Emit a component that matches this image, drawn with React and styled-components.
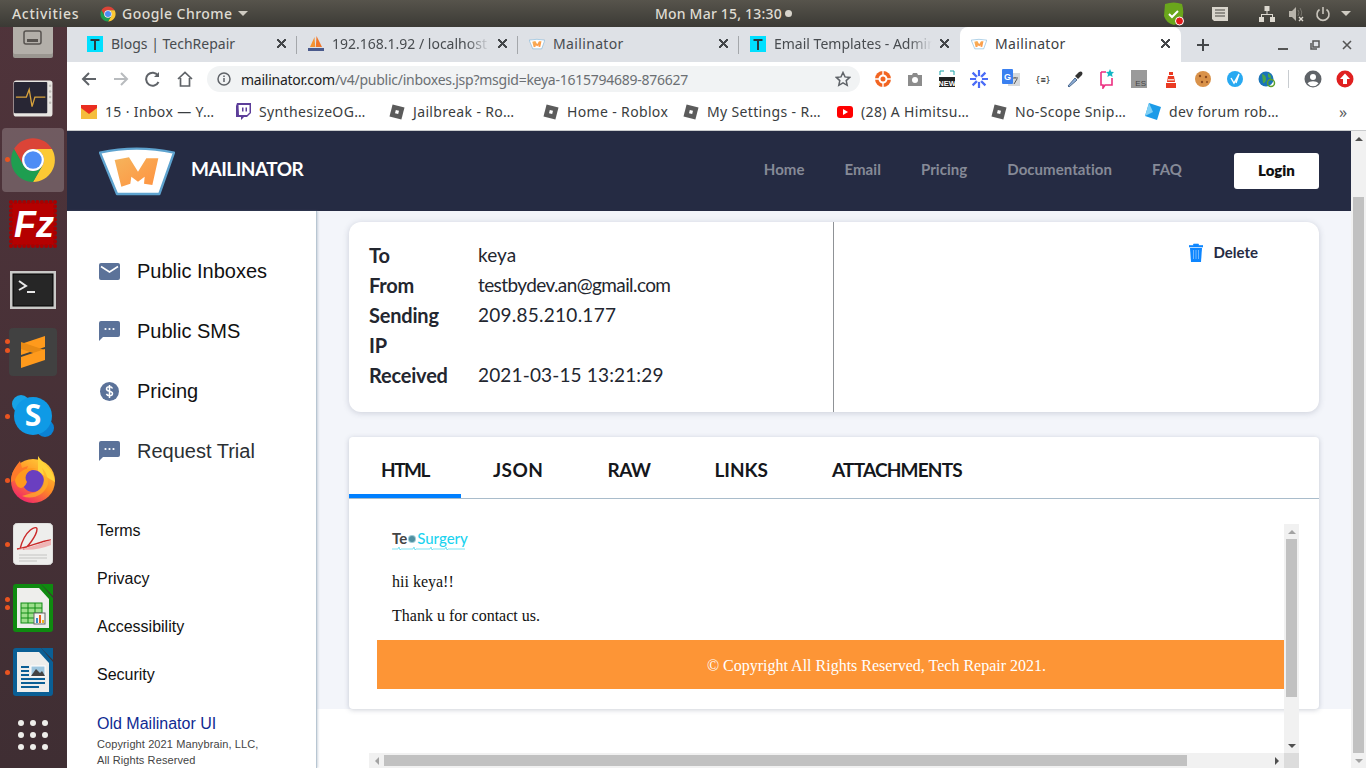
import { createGlobalStyle, styled } from "styled-components";

const GlobalStyle = createGlobalStyle`
  html, body { margin: 0; padding: 0; overflow: hidden; }
  * { box-sizing: border-box; }
  #root { width: 1366px; height: 768px; }
`;

const UI_FONT = `"Noto Sans", "Open Sans", sans-serif`;
const SITE_FONT = `Lato, "Open Sans", sans-serif`;

const Screen = styled.div`
  width: 1366px;
  height: 768px;
  display: flex;
  flex-direction: column;
  overflow: hidden;
  background: #fff;
`;

/* ubuntu top bar */
const TopBar = styled.div`
  height: 27px;
  flex: none;
  display: flex;
  align-items: center;
  background: linear-gradient(#57544c, #3b3a35);
  color: #dfdbd2;
  font: 500 14px ${UI_FONT};
`;
const Activities = styled.div`
  width: 88px;
  padding-left: 12px;
  letter-spacing: 0.7px;
`;
const AppMenu = styled.div`
  width: 567px;
  padding-left: 12px;
  display: flex;
  align-items: center;
  gap: 6px;
  letter-spacing: 0.45px;
`;
const Caret = styled.span`
  width: 0;
  height: 0;
  border-left: 5px solid transparent;
  border-right: 5px solid transparent;
  border-top: 5px solid #cfcbc2;
`;
const Clock = styled.div`
  width: 507px;
  display: flex;
  align-items: center;
  gap: 3px;
  letter-spacing: 0.2px;
`;
const ClockDot = styled.span`
  width: 7px;
  height: 7px;
  border-radius: 50%;
  background: #d8d4cb;
`;
const Tray = styled.div`
  flex: 1;
  display: flex;
  align-items: center;
`;
const TrayItem = styled.div`
  width: ${p => p.$w}px;
  display: flex;
  justify-content: center;
`;

const Desktop = styled.div`
  flex: 1;
  display: flex;
  min-height: 0;
`;

/* launcher */
const Dock = styled.div`
  width: 67px;
  margin-top: -27px;
  flex: none;
  display: flex;
  flex-direction: column;
  justify-content: flex-end;
  overflow: hidden;
  height: 768px;
  background: linear-gradient(#50343b, #3f2e33);
  clip-path: inset(27px 0 0 0);
`;
const DockSlot = styled.div`
  flex: none;
  height: 64px;
  padding-top: ${p => p.$nudge || 0}px;
  position: relative;
  display: flex;
  align-items: center;
  justify-content: center;
  background: ${p => (p.$active ? "rgba(255,255,255,.2)" : "transparent")};
  border-radius: 4px;
  margin: 0 3px 0 2px;
`;
const DockDot = styled.span`
  position: absolute;
  left: 3px;
  top: ${p => p.$top}px;
  width: 5px;
  height: 5px;
  border-radius: 50%;
  background: #e95420;
`;

const Browser = styled.div`
  flex: 1;
  min-width: 0;
  display: flex;
  flex-direction: column;
`;

/* tabs */
const TabStrip = styled.div`
  height: 35px;
  flex: none;
  display: flex;
  align-items: stretch;
  background: #dee1e6;
  padding-left: 9px;
  font: 14px ${UI_FONT};
`;
const BrowserTab = styled.div`
  width: 221px;
  flex: none;
  display: flex;
  align-items: center;
  padding: 0 10px 2px 11px;
  gap: 8px;
  position: relative;
  color: ${p => (p.$active ? "#3c4043" : "#484c50")};
  background: ${p => (p.$active ? "#fff" : "transparent")};
  border-radius: ${p => (p.$active ? "8px 8px 0 0" : "0")};
  &::after {
    content: "";
    display: ${p => (p.$sep ? "block" : "none")};
    position: absolute;
    right: 0;
    top: 9px;
    height: 18px;
    width: 1px;
    background: #a4a7ab;
  }
`;
const TabTitle = styled.span`
  flex: 1;
  white-space: nowrap;
  overflow: hidden;
  letter-spacing: ${p => p.$ls ?? 0}px;
  mask-image: ${p => (p.$fade ? "linear-gradient(90deg, #000 85%, transparent)" : "none")};
`;
const TabClose = styled.span`
  width: 9px;
  height: 9px;
  flex: none;
  margin-right: 1px;
  background:
    linear-gradient(45deg, transparent 44%, #44474a 44%, #44474a 56%, transparent 56%),
    linear-gradient(-45deg, transparent 44%, #44474a 44%, #44474a 56%, transparent 56%);
`;
const NewTab = styled.div`
  width: 44px;
  flex: none;
  display: flex;
  align-items: center;
  justify-content: center;
`;
const WindowButtons = styled.div`
  flex: none;
  display: flex;
  align-items: center;
  padding-left: 42px;
`;
const WindowButton = styled.div`
  width: 32px;
  display: flex;
  justify-content: center;
`;

/* toolbar */
const Toolbar = styled.div`
  height: 34px;
  flex: none;
  display: flex;
  align-items: center;
  background: #fff;
`;
const NavButton = styled.div`
  width: 32px;
  display: flex;
  justify-content: center;
`;
const NavGroup = styled.div`
  display: flex;
  padding-left: 6px;
  width: 140px;
`;
const Omnibox = styled.div`
  width: 653px;
  height: 26px;
  border-radius: 13px;
  background: #f1f3f4;
  display: flex;
  align-items: center;
  padding: 0 9px 0 10px;
  font: 14px ${UI_FONT};
  color: #6b6f73;
  gap: 10px;
`;
const Url = styled.div`
  flex: 1;
  white-space: nowrap;
  letter-spacing: -0.25px;
  b { font-weight: 400; color: #222; }
`;
const Extensions = styled.div`
  display: flex;
  align-items: center;
  padding-left: 7px;
`;
const Extension = styled.div`
  width: 32px;
  height: 20px;
  display: flex;
  align-items: center;
  justify-content: center;
`;
const ToolDivider = styled.div`
  width: 1px;
  height: 18px;
  background: #c8ccd0;
  margin: 0 8px 0 5px;
`;

/* bookmarks */
const Bookmarks = styled.div`
  height: 35px;
  flex: none;
  display: flex;
  align-items: center;
  padding: 0 0 3px 14px;
  border-bottom: 1px solid #c9cbcd;
  background: #fff;
  font: 14px ${UI_FONT};
  letter-spacing: 0.35px;
  color: #3a3d40;
`;
const Bookmark = styled.div`
  width: ${p => p.$w || 154}px;
  flex: none;
  display: flex;
  align-items: center;
  gap: 8px;
  white-space: nowrap;
`;
const MoreBookmarks = styled.div`
  margin-left: 40px;
  font-size: 16px;
  color: #5a5d60;
`;

/* page */
const Page = styled.div`
  flex: 1;
  min-height: 0;
  display: flex;
`;
const PageBody = styled.div`
  flex: 1;
  min-width: 0;
  display: flex;
  flex-direction: column;
`;
const VScroll = styled.div`
  width: 15px;
  flex: none;
  background: #f1f1f1;
  display: flex;
  flex-direction: column;
  align-items: center;
`;
const HScroll = styled.div`
  height: 15px;
  background: #f1f1f1;
  display: flex;
  align-items: center;
`;
const ArrowBox = styled.div`
  flex: none;
  width: 15px;
  height: ${p => p.$h || 15}px;
  display: flex;
  align-items: center;
  justify-content: center;
`;
const ArrowGlyph = styled.span`
  width: 0;
  height: 0;
  ${p => p.$dir === "up" && `border-left:4px solid transparent;border-right:4px solid transparent;border-bottom:4px solid ${p.$c};`}
  ${p => p.$dir === "down" && `border-left:4px solid transparent;border-right:4px solid transparent;border-top:4px solid ${p.$c};`}
  ${p => p.$dir === "left" && `border-top:4px solid transparent;border-bottom:4px solid transparent;border-right:4px solid ${p.$c};`}
  ${p => p.$dir === "right" && `border-top:4px solid transparent;border-bottom:4px solid transparent;border-left:4px solid ${p.$c};`}
`;
const VThumb = styled.div`
  width: 11px;
  height: ${p => p.$h}px;
  margin-top: ${p => p.$top || 0}px;
  flex: none;
  background: #c1c1c1;
`;
const HThumb = styled.div`
  height: 11px;
  width: ${p => p.$w}px;
  flex: none;
  background: #c1c1c1;
`;
const ScrollGap = styled.div`
  flex: 1;
`;

const SiteHeader = styled.header`
  height: 80px;
  flex: none;
  background: #252b43;
  display: flex;
  align-items: center;
  padding: 0 32px;
`;
const Brand = styled.div`
  display: flex;
  align-items: center;
  gap: 16px;
  color: #fff;
  font: 700 19px ${SITE_FONT};
  letter-spacing: -0.5px;
`;
const BrandName = styled.span`
  padding-bottom: 5px;
`;
const SiteNav = styled.nav`
  margin-left: auto;
  display: flex;
  align-items: center;
  gap: 40px;
  color: #868a97;
  font: 700 15px ${SITE_FONT};
  letter-spacing: 0.05px;
`;
const SiteNavLink = styled.span`
  padding-bottom: 5px;
`;
const LoginButton = styled.button`
  width: 85px;
  height: 36px;
  margin-left: 12px;
  padding: 0 0 2px;
  border: 0;
  border-radius: 3px;
  background: #fff;
  color: #111;
  font: 800 15px ${SITE_FONT};
`;
const SiteMain = styled.div`
  flex: 1;
  min-height: 0;
  display: flex;
`;

const Sidebar = styled.aside`
  width: 250px;
  flex: none;
  background: #fff;
  border-right: 1px solid #b8c6d2;
  box-shadow: 1px 0 2px rgba(120, 140, 160, 0.35);
  padding: 30px 0 0 30px;
  font-family: "Liberation Sans", Arial, sans-serif;
  color: #111;
  position: relative;
`;
const SideNav = styled.div`
  display: flex;
  flex-direction: column;
  margin-bottom: 26px;
`;
const SideNavItem = styled.div`
  height: 60px;
  display: flex;
  align-items: center;
  gap: 17px;
  padding-left: 2px;
  font-size: 20px;
  color: ${p => p.$muted ? "#2b2f33" : "#111"};
`;
const FootLink = styled.div`
  height: 48px;
  display: flex;
  align-items: center;
  font-size: 16px;
  color: #111;
`;
const OldUi = styled.div`
  margin-top: 15px;
  font-size: 16px;
  line-height: 20px;
  color: #0f2a92;
`;
const Copyright = styled.div`
  margin-top: 2px;
  font-size: 11px;
  line-height: 16px;
  letter-spacing: 0.1px;
  color: #444;
`;

const Content = styled.main`
  flex: 1;
  min-width: 0;
  height: 498px;
  background: #f3f5fa;
  padding: 11px 32px 0;
  display: flex;
  flex-direction: column;
  gap: 25px;
`;
const MetaCard = styled.section`
  height: 190px;
  flex: none;
  display: flex;
  background: #fff;
  border-radius: 12px;
  box-shadow: 0 1px 6px rgba(60, 70, 100, 0.22);
  font: 19px ${SITE_FONT};
  color: #23262f;
`;
const MetaList = styled.dl`
  width: 485px;
  margin: 0;
  padding: 18px 20px 0;
  border-right: 1px solid #8f9296;
  display: grid;
  grid-template-columns: 109px 1fr;
  grid-auto-rows: min-content;
  line-height: 30px;
`;
const MetaLabel = styled.dt`
  width: 90px;
  font-size: 20px;
  font-weight: 700;
  letter-spacing: -0.2px;
`;
const MetaValue = styled.dd`
  margin: 0;
  letter-spacing: ${p => p.$ls ?? 0}px;
`;
const MetaActions = styled.div`
  flex: 1;
  display: flex;
  justify-content: flex-end;
  padding: 21px 61px 0 0;
`;
const DeleteButton = styled.div`
  display: flex;
  align-items: flex-start;
  gap: 10px;
  font: 700 15px ${SITE_FONT};
  line-height: 18px;
  color: #252b43;
`;

const MailCard = styled.section`
  height: 272px;
  flex: none;
  background: #fff;
  border-radius: 4px;
  box-shadow: 0 1px 5px rgba(60, 70, 100, 0.25);
`;
const MailTabs = styled.div`
  height: 62px;
  display: flex;
  border-bottom: 1px solid #a9bccb;
  font: 700 19px ${SITE_FONT};
  color: #15171c;
`;
const MailTab = styled.div`
  height: 61px;
  padding: 8px 32px 0;
  display: flex;
  align-items: center;
  border-bottom: 4px solid ${p => (p.$active ? "#0080ff" : "transparent")};
  letter-spacing: ${p => p.$ls ?? 0}px;
`;

/* the message iframe, it hangs out of the bottom of the card */
const MailFrame = styled.div`
  width: 930px;
  height: 244px;
  margin: 25px 0 0 20px;
  display: grid;
  grid-template-columns: 915px 15px;
  grid-template-rows: 229px 15px;
  position: relative;
`;
const FrameViewport = styled.div`
  overflow: hidden;
  padding: 7px 0 0 8px;
  font: 16px/18px "Liberation Serif", "Times New Roman", serif;
  color: #111;
`;
const MailLogo = styled.div`
  width: 74px;
  height: 42px;
  margin-left: 15px;
  font: 500 15px/15px ${SITE_FONT};
  color: #1cd3ef;
  display: flex;
  flex-direction: column;
  align-items: flex-start;
`;
const MailLogoWord = styled.div`
  display: flex;
  align-items: center;
  gap: 1px;
  span { color: #444; font-weight: 700; }
`;
const MailLogoGear = styled.i`
  width: 6px;
  height: 6px;
  flex: none;
  border-radius: 50%;
  background: #4f8fa0;
  box-shadow: 0 0 0 1px #9cc9d4;
  margin: 1px 1px 0;
`;
const MailText = styled.p`
  margin: 0 0 16px 15px;
`;
const MailFooter = styled.div`
  width: 999px;
  height: 49px;
  margin-top: -1px;
  padding-top: 3px;
  background: #fd9536;
  color: #fff;
  display: flex;
  align-items: center;
  justify-content: center;
`;
const ScrollCorner = styled.div`
  background: #dcdcdc;
`;

const Gradient = ({ id, from, to }) => (
  <linearGradient id={id} x1="0" y1="0" x2="1" y2="1">
    <stop offset="0" stopColor={from} />
    <stop offset="1" stopColor={to} />
  </linearGradient>
);

const MailinatorLogo = ({ width = 76, height = 50, uid = "logo" }) => (
  <svg width={width} height={height} viewBox="0 0 228 150">
    <defs>
      <Gradient id={uid} from="#f5b45c" to="#ff9240" />
    </defs>
    <path d="M3 20 Q112 -4 225 20 L181 144 L54 144 Z" fill="#fff" stroke="#5ea3cf" strokeWidth="7" strokeLinejoin="round" />
    <path d="M47 42 L90 34 L117 77 L142 37 L178 37 L160 117 L135 113 L137 92 L117 107 L97 92 L94 113 L67 122 Z" fill={`url(#${uid})`} />
  </svg>
);

const ChromeLogo = ({ size }) => (
  <svg width={size} height={size} viewBox="3 3 42 42">
    <path d="M6.7 14 A20 20 0 0 1 41.3 14 L24 14 A10 10 0 0 0 15.3 29 Z" fill="#db4437" />
    <path d="M41.3 14 A20 20 0 0 1 24 44 L32.66 29 A10 10 0 0 0 24 14 Z" fill="#fcc934" />
    <path d="M24 44 A20 20 0 0 1 6.7 14 L15.3 29 A10 10 0 0 0 32.66 29 Z" fill="#1e9e50" />
    <circle cx="24" cy="24" r="10" fill="#fff" />
    <circle cx="24" cy="24" r="8" fill="#4e8df5" />
  </svg>
);

const TFavicon = () => (
  <svg width="16" height="16" viewBox="0 0 16 16">
    <rect width="16" height="16" fill="#00e0ff" />
    <path d="M3.500 3h9v2H9v9H7V5H3.500z" fill="#2c3a40" />
  </svg>
);
const PmaFavicon = () => (
  <svg width="16" height="16" viewBox="0 0 16 16">
    <path d="M2 11 L6.500 1 L7.200 11 Z" fill="#f59331" />
    <path d="M7.800 11 L8.500 0 L14 11 Z" fill="#f0762a" />
    <rect x="0" y="12" width="16" height="3" fill="#4a5a8c" />
  </svg>
);
const Roblox = () => (
  <svg width="16" height="16" viewBox="0 0 16 16">
    <path d="M3.600 0.500 L15.500 3.600 L12.400 15.500 L0.500 12.400 Z" fill="#5b5b5b" />
    <path d="M6.800 6 L10 6.800 L9.200 10 L6 9.200 Z" fill="#fff" />
  </svg>
);

const DockIcons = {
  Drive: () => (
    <svg width="42" height="60" viewBox="0 0 42 60">
      <rect x="1" y="6" width="40" height="48" rx="2" fill="#9a9690" />
      <rect x="1" y="6" width="40" height="44" rx="2" fill="#b3afa9" />
      <rect x="12" y="27" width="17" height="13" rx="2" fill="none" stroke="#57534f" strokeWidth="1.500" />
      <rect x="15" y="35" width="11" height="3" fill="#57534f" />
    </svg>
  ),
  Monitor: () => (
    <svg width="42" height="38" viewBox="0 0 42 40">
      <rect x="0.500" y="0.500" width="41" height="38" rx="3" fill="#e8e6e2" />
      <rect x="1" y="2" width="35" height="33" rx="1" fill="#282634" />
      <path d="M3 18 H14 L17 10 L20 28 L23 18 H34" stroke="#d8a23c" strokeWidth="1.400" fill="none" />
      <g fill="#bdbbb6"><circle cx="39" cy="6" r="1.300" /><circle cx="39" cy="12" r="1.300" /><circle cx="39" cy="18" r="1.300" /><circle cx="39" cy="24" r="1.300" /></g>
    </svg>
  ),
  Filezilla: () => (
    <svg width="48" height="48" viewBox="0 0 48 48">
      <rect x="3" y="3" width="42" height="42" fill="#b50000" />
      <rect x="2" y="2" width="44" height="44" fill="none" stroke="#a80000" strokeWidth="4" strokeLinecap="round" strokeDasharray="0.100 4.300" />
      <text x="5" y="37" fill="#fff" fontFamily="Liberation Sans" fontStyle="italic" fontWeight="700" fontSize="36">Fz</text>
    </svg>
  ),
  Terminal: () => (
    <svg width="46" height="38" viewBox="0 0 46 38">
      <rect width="46" height="38" fill="#c9c9c7" />
      <rect x="3" y="3" width="40" height="32" fill="#262626" stroke="#000" />
      <path d="M9 10 L16 15 L9 19" stroke="#e8e8e8" strokeWidth="2" fill="none" />
      <rect x="17" y="20" width="8" height="2" fill="#e8e8e8" />
    </svg>
  ),
  Sublime: () => (
    <svg width="48" height="48" viewBox="0 0 48 48">
      <rect width="48" height="48" rx="4" fill="#414141" />
      <path d="M12 16 L36 8 V19 L12 27 Z" fill="#ff9a1c" />
      <path d="M12 21 L36 29 V22 L12 14 Z" fill="#e88a14" />
      <path d="M12 29 L36 21 V32 L12 40 Z" fill="#ff9a1c" />
    </svg>
  ),
  Skype: () => (
    <svg width="44" height="44" viewBox="0 0 44 44">
      <circle cx="10" cy="10" r="9" fill="#17a3e6" />
      <circle cx="34" cy="34" r="9" fill="#0b82d4" />
      <circle cx="22" cy="22" r="19" fill="#0f9ae6" />
      <text x="22" y="32" fill="#fff" textAnchor="middle" fontFamily="Open Sans" fontWeight="700" fontSize="30">S</text>
    </svg>
  ),
  Firefox: () => (
    <svg width="46" height="48" viewBox="0 0 46 48">
      <defs>
        <linearGradient id="fox" x1="0.900" y1="0" x2="0.300" y2="1">
          <stop offset="0" stopColor="#ffd53a" />
          <stop offset="0.550" stopColor="#ff8a24" />
          <stop offset="1" stopColor="#f0246c" />
        </linearGradient>
      </defs>
      <circle cx="23" cy="25" r="22" fill="url(#fox)" />
      <path d="M28 0 C33 8 44 14 45 26 L28 16 Z" fill="#ffd43a" />
      <path d="M1 26 C1 16 6 10 10 5 L12 12 L18 10 L14 20 Z" fill="#ff7a2a" />
      <circle cx="23" cy="25" r="11" fill="#6a3fc0" />
      <path d="M5 24 C8 15 17 10 27 13 C18 13 13 20 17 26 C13 36 6 32 5 24 Z" fill="#ff9a1e" />
      <path d="M12 40 C22 44 34 40 38 28 C38 18 34 14 32 12 C37 24 32 36 22 37 Z" fill="#ffb028" opacity="0.700" />
    </svg>
  ),
  Pdf: () => (
    <svg width="40" height="42" viewBox="0 0 40 42">
      <rect width="40" height="42" rx="5" fill="#eeeeec" stroke="#cfcfcd" />
      <path d="M7 26 C12 6 24 2 24 6 C24 12 14 26 10 26 M4 26 C16 24 28 18 38 17" stroke="#cb2a2a" strokeWidth="1.400" fill="none" />
      <path d="M5 26 C18 25 28 20 38 17 V22 C28 26 16 28 5 26 Z" fill="#efb5b5" />
      <path d="M6 32 H34 M6 35 H34 M6 38 H24" stroke="#c4c4c2" strokeWidth="1" />
    </svg>
  ),
  Calc: () => (
    <svg width="40" height="48" viewBox="0 0 40 48">
      <path d="M0 3 Q0 0 3 0 H28 L40 14 V45 Q40 48 37 48 H3 Q0 48 0 45 Z" fill="#0f8a10" />
      <path d="M4 4 H26 L36 15 V44 H4 Z" fill="#eeeeec" />
      <path d="M28 0 H40 V12 Z" fill="#0f8a10" />
      <rect x="8" y="19" width="21" height="20" fill="#9ddf8c" stroke="#118b14" />
      <path d="M8 24 H29 M8 29 H29 M8 34 H29 M15 19 V39 M22 19 V39" stroke="#118b14" />
      <rect x="21" y="29" width="11" height="11" fill="#f4f4f2" stroke="#666" />
      <rect x="23" y="34" width="2" height="5" fill="#3a86c8" />
      <rect x="26" y="31" width="2" height="8" fill="#e8641c" />
      <rect x="29" y="36" width="2" height="3" fill="#f0b41c" />
    </svg>
  ),
  Writer: () => (
    <svg width="40" height="48" viewBox="0 0 40 48">
      <path d="M0 3 Q0 0 3 0 H28 L40 14 V45 Q40 48 37 48 H3 Q0 48 0 45 Z" fill="#0a5f95" />
      <path d="M4 4 H26 L36 15 V44 H4 Z" fill="#eeeeec" />
      <path d="M28 0 H40 V12 Z" fill="#0a5f95" />
      <path d="M8 19 H16 M8 23 H16 M8 27 H16 M8 31 H32 M8 35 H32 M8 39 H26" stroke="#0a5f95" strokeWidth="2" />
      <rect x="18" y="18" width="14" height="10" fill="#9ec6de" stroke="#fff" />
      <path d="M18 28 L23 21 L27 25 L29 23 L32 28 Z" fill="#444" />
    </svg>
  ),
  Apps: () => (
    <svg width="32" height="32" viewBox="0 0 32 32" fill="#eeeeea">
      {[3, 15, 27].flatMap(y => [4, 16, 28].map(x => <circle key={`${x}-${y}`} cx={x} cy={y} r="3" />))}
    </svg>
  ),
};

const dockItems = [
  { name: "Drive", dots: [6], nudge: 4 },
  { name: "Monitor", dots: [], nudge: 6 },
  { name: "Chrome", dots: [29], active: true },
  { name: "Filezilla", dots: [] },
  { name: "Terminal", dots: [], nudge: 4 },
  { name: "Sublime", dots: [19, 28] },
  { name: "Skype", dots: [30] },
  { name: "Firefox", dots: [30] },
  { name: "Pdf", dots: [30] },
  { name: "Calc", dots: [21, 29] },
  { name: "Writer", dots: [30] },
  { name: "Apps", dots: [] },
];

const extensionIcons = [
  <svg key="a" width="18" height="18" viewBox="0 0 18 18"><circle cx="9" cy="9" r="8" fill="#f26522" /><circle cx="9" cy="9" r="3.500" fill="none" stroke="#fff" strokeWidth="2" /><path d="M9 1v4M9 13v4M1 9h4M13 9h4" stroke="#fff" strokeWidth="1.400" /></svg>,
  <svg key="b" width="16" height="14" viewBox="0 0 16 14"><path d="M1 3h4l1-2h4l1 2h4v11H1z" fill="#8c8c8c" /><circle cx="8" cy="8" r="3" fill="#fff" /></svg>,
  <svg key="c" width="16" height="18" viewBox="0 0 16 18"><path d="M1 5V1h4M11 1h4v4" stroke="#1ba3a8" fill="none" /><rect y="7" width="16" height="10" fill="#222" /><text x="8" y="15.500" fill="#fff" textAnchor="middle" fontFamily="Liberation Sans" fontWeight="700" fontSize="7.500">NEW</text></svg>,
  <svg key="d" width="18" height="18" viewBox="0 0 18 18"><g stroke="#4a6cf7" strokeWidth="2.200"><path d="M9 0v18M0 9h18M2.600 2.600l12.800 12.800M15.400 2.600L2.600 15.400" /></g><circle cx="9" cy="9" r="3" fill="#fff" /></svg>,
  <svg key="e" width="18" height="20" viewBox="0 0 18 20"><rect x="6" y="4" width="12" height="13" fill="#d6d9dc" /><rect width="11" height="15" rx="1" fill="#3a80f0" /><text x="5.500" y="11" fill="#fff" textAnchor="middle" fontFamily="Liberation Sans" fontWeight="700" fontSize="9">G</text><path d="M11 9h5M13 8v1M12 15l3-5" stroke="#555" fill="none" /></svg>,
  <svg key="f" width="16" height="10" viewBox="0 0 16 10"><text x="8" y="8.500" textAnchor="middle" fontFamily="DejaVu Sans Mono" fontSize="8.500" fill="#222">{"{≡}"}</text></svg>,
  <svg key="g" width="18" height="18" viewBox="0 0 18 18"><path d="M2 16 L9 8 L11 10 L3 17 Z" fill="#8fb0d8" stroke="#4d6a90" /><path d="M9 6 L13 2 Q15 1 16 2 Q17 3 16 5 L12 9 Z" fill="#333" /></svg>,
  <svg key="h" width="16" height="20" viewBox="0 0 16 20"><path d="M2 3h5M13 9v7H6l-2 3v-3H2V3" stroke="#ec2f80" strokeWidth="1.600" fill="none" /><path d="M11 0l1.200 2.800L15 3l-2 2 .6 3L11 6.500 8.400 8 9 5 7 3l2.800-.2z" fill="#14b5c4" /></svg>,
  <svg key="i" width="16" height="18" viewBox="0 0 16 18"><rect width="16" height="18" fill="#9a9a9a" /><text x="15" y="16" textAnchor="end" fontFamily="Liberation Sans" fontSize="8" fill="#444">ES</text></svg>,
  <svg key="j" width="14" height="18" viewBox="0 0 14 18"><path d="M5 2h4v3H5zM4 6h6l1 6H3zM2 13h10v5H2z" fill="#ea3a22" /><path d="M4 9h6v1.500H4z" fill="#f7d0c8" /></svg>,
  <svg key="k" width="18" height="18" viewBox="0 0 18 18"><circle cx="9" cy="9" r="8" fill="#d9924a" /><g fill="#8a4a20"><circle cx="6" cy="6" r="1.200" /><circle cx="12" cy="7" r="1.200" /><circle cx="8" cy="12" r="1.200" /><circle cx="13" cy="12" r="1" /></g></svg>,
  <svg key="l" width="18" height="18" viewBox="0 0 18 18"><circle cx="9" cy="9" r="8" fill="#28a9f1" /><path d="M5 8l3 5 5-9-3 9" stroke="#fff" strokeWidth="1.400" fill="none" /></svg>,
  <svg key="m" width="18" height="18" viewBox="0 0 18 18"><circle cx="8" cy="9" r="7.500" fill="#1a74b8" /><path d="M4 4q4 1 4 5t-3 4zM10 3q4 2 3 6l-3-2z" fill="#4aa64a" /><circle cx="13" cy="13" r="3.500" fill="none" stroke="#5aa02c" strokeWidth="1.500" /></svg>,
];

const bookmarks = [
  { title: "15 · Inbox — Y…", icon: <svg width="16" height="14" viewBox="0 0 16 14"><rect width="16" height="14" fill="#f5bd3c" /><path d="M0 0h16v3L8 9 0 3z" fill="#ea2d20" /></svg> },
  { title: "SynthesizeOG…", icon: <svg width="16" height="17" viewBox="0 0 16 17"><path d="M2 0h14v10l-4 4H9l-3 3v-3H1V3z" fill="#5c3d99" /><path d="M3.500 2h11v7.500L12 12H4z" fill="#fff" /><path d="M7 4.500h1.500v4H7zM10.500 4.500H12v4h-1.500z" fill="#5c3d99" /></svg> },
  { title: "Jailbreak - Ro…", icon: <Roblox /> },
  { title: "Home - Roblox", icon: <Roblox />, w: 140 },
  { title: "My Settings - R…", icon: <Roblox /> },
  { title: "(28) A Himitsu…", icon: <svg width="16" height="12" viewBox="0 0 16 12"><rect width="16" height="12" rx="3" fill="#f00" /><path d="M6 3l5 3-5 3z" fill="#fff" /></svg> },
  { title: "No-Scope Snip…", icon: <Roblox /> },
  { title: "dev forum rob…", icon: <svg width="16" height="17" viewBox="0 0 16 17"><path d="M4 0 L16 4 L12 17 L0 13 Z" fill="#1b9be8" /><path d="M4 0 L8 9 L0 13 Z" fill="#7fd0f5" /></svg> },
];

const TrayIcons = {
  Shield: () => (
    <svg width="24" height="24" viewBox="0 0 24 24">
      <path d="M3 2 Q12 -1 20 2 Q23 12 19 20 L12 23 Q4 21 2 14 Z" fill="#6aa61c" />
      <path d="M7 12l3 3 6-6" stroke="#fff" strokeWidth="2" fill="none" />
      <circle cx="17.500" cy="19" r="4" fill="#e21b1b" stroke="#fff" />
    </svg>
  ),
  List: () => (
    <svg width="16" height="14" viewBox="0 0 16 14">
      <path d="M0 0h16v14H2L0 12z" fill="#d9d5cc" />
      <path d="M3 3h10M3 6h10M3 9h10" stroke="#4a4842" strokeWidth="1.200" />
    </svg>
  ),
  Net: () => (
    <svg width="16" height="16" viewBox="0 0 16 16" fill="#dcd8cf">
      <rect x="5.500" y="0" width="5" height="5" />
      <rect x="0" y="11" width="5" height="5" />
      <rect x="11" y="11" width="5" height="5" />
      <path d="M7.500 5h1v3h5.500v3h-1V9H3v2H2V8h5.500z" />
    </svg>
  ),
  Speaker: () => (
    <svg width="16" height="16" viewBox="0 0 16 16">
      <path d="M0 5h3l4-4v14l-4-4H0z" fill="#b8b4ab" />
      <path d="M9 4q2 2 0 6M11 2q3 4 1 8" stroke="#77746c" fill="none" />
      <path d="M10 11l4 4M14 11l-4 4" stroke="#dcd8cf" strokeWidth="1.400" />
    </svg>
  ),
  Power: () => (
    <svg width="16" height="16" viewBox="0 0 16 16" fill="none" stroke="#c9c5bc" strokeWidth="1.600">
      <path d="M8 1v7" />
      <path d="M4.500 3.500a6 6 0 1 0 7 0" />
    </svg>
  ),
};

const navIconColor = "#5b7299";
const MailIcon = () => (
  <svg width="21" height="17" viewBox="0 0 21 17">
    <rect width="21" height="17" rx="2" fill={navIconColor} />
    <path d="M2 3.500l8.500 5.500L19 3.500" stroke="#fff" strokeWidth="1.600" fill="none" />
  </svg>
);
const ChatIcon = () => (
  <svg width="21" height="20" viewBox="0 0 21 20">
    <path d="M2 0h17a2 2 0 0 1 2 2v12a2 2 0 0 1-2 2H4l-4 4V2a2 2 0 0 1 2-2z" fill={navIconColor} />
    <g fill="#fff"><circle cx="6.500" cy="8" r="1.100" /><circle cx="10.500" cy="8" r="1.100" /><circle cx="14.500" cy="8" r="1.100" /></g>
  </svg>
);
const DollarIcon = () => (
  <svg width="21" height="21" viewBox="0 0 21 21">
    <circle cx="10.500" cy="10.500" r="9.500" fill={navIconColor} />
    <path d="M13.500 7.500c-.5-1.200-1.600-1.800-3-1.800-1.700 0-3 .8-3 2.200 0 3 6 1.600 6 4.600 0 1.400-1.300 2.300-3 2.300-1.500 0-2.600-.7-3.100-1.900M10.500 4v13" stroke="#fff" strokeWidth="1.500" fill="none" />
  </svg>
);
const TrashIcon = () => (
  <svg width="14" height="19" viewBox="0 0 14 19">
    <path d="M0 2.500h14v1.500H0zM4.500 2.500V1h5v1.500" fill="#0d86ff" stroke="#0d86ff" strokeWidth=".6" />
    <path d="M1 5h12l-1 14H2z" fill="#0d86ff" />
    <path d="M4.500 7v9M7 7v9M9.500 7v9" stroke="#8cc4ff" strokeWidth=".8" />
  </svg>
);
const LogoPulse = () => (
  <svg width="74" height="5" viewBox="0 0 74 5">
    <path d="M0 3h6l1-2 1 3 1-1h12l1-2 1 3 1-1h14l1-2 1 3 1-1h12l1-2 1 3 1-1h17" stroke="#5fdcf0" strokeWidth=".8" fill="none" />
  </svg>
);

const Stroke = { fill: "none", stroke: "#5f6368", strokeWidth: 2 };

const Arrow = ({ dir, c = "#505050", h }) => (
  <ArrowBox $h={h}>
    <ArrowGlyph $dir={dir} $c={c} />
  </ArrowBox>
);

const App = () => (
  <Screen>
    <GlobalStyle />
    <TopBar>
      <Activities>Activities</Activities>
      <AppMenu>
        <ChromeLogo size={16} />
        Google Chrome
        <Caret />
      </AppMenu>
      <Clock>Mon Mar 15, 13:30 <ClockDot /></Clock>
      <Tray>
        <TrayItem $w={24}><TrayIcons.Shield /></TrayItem>
        <TrayItem $w={67}><TrayIcons.List /></TrayItem>
        <TrayItem $w={28}><TrayIcons.Net /></TrayItem>
        <TrayItem $w={31}><TrayIcons.Speaker /></TrayItem>
        <TrayItem $w={22}><TrayIcons.Power /></TrayItem>
        <TrayItem $w={24}><Caret /></TrayItem>
      </Tray>
    </TopBar>
    <Desktop>
      <Dock>
        {dockItems.map(item => {
          const Icon = DockIcons[item.name];
          return (
            <DockSlot key={item.name} $active={item.active} $nudge={item.nudge}>
              {item.dots.map(top => <DockDot key={top} $top={top} />)}
              {item.name === "Chrome" ? <ChromeLogo size={46} /> : <Icon />}
            </DockSlot>
          );
        })}
      </Dock>
      <Browser>
        <TabStrip>
          <BrowserTab $sep><TFavicon /><TabTitle>Blogs | TechRepair</TabTitle><TabClose /></BrowserTab>
          <BrowserTab $sep><PmaFavicon /><TabTitle $fade>192.168.1.92 / localhost</TabTitle><TabClose /></BrowserTab>
          <BrowserTab $sep><MailinatorLogo width={16} height={12} uid="fav1" /><TabTitle $ls={0.35}>Mailinator</TabTitle><TabClose /></BrowserTab>
          <BrowserTab><TFavicon /><TabTitle $fade>Email Templates - Admin</TabTitle><TabClose /></BrowserTab>
          <BrowserTab $active><MailinatorLogo width={16} height={12} uid="fav2" /><TabTitle $ls={0.35}>Mailinator</TabTitle><TabClose /></BrowserTab>
          <NewTab>
            <svg width="14" height="14" viewBox="0 0 14 14"><path d="M7 1v12M1 7h12" stroke="#44474a" strokeWidth="2" /></svg>
          </NewTab>
          <WindowButtons>
            <WindowButton><svg width="10" height="10" viewBox="0 0 10 10"><path d="M0 9h10" stroke="#555" strokeWidth="2" /></svg></WindowButton>
            <WindowButton><svg width="10" height="10" viewBox="0 0 10 10" fill="none" stroke="#555" strokeWidth="1.500"><rect x="3" y="1" width="6" height="6" /><path d="M1 3v6h6" /></svg></WindowButton>
            <WindowButton><svg width="10" height="10" viewBox="0 0 10 10"><path d="M1 1l8 8M9 1l-8 8" stroke="#555" strokeWidth="1.600" /></svg></WindowButton>
          </WindowButtons>
        </TabStrip>
        <Toolbar>
          <NavGroup>
            <NavButton><svg width="16" height="16" viewBox="0 0 16 16" {...Stroke}><path d="M15 8H2M8 2L2 8l6 6" /></svg></NavButton>
            <NavButton><svg width="16" height="16" viewBox="0 0 16 16" {...Stroke} stroke="#b8bbbe"><path d="M1 8h13M8 2l6 6-6 6" /></svg></NavButton>
            <NavButton><svg width="16" height="16" viewBox="0 0 16 16" {...Stroke}><path d="M13.500 11A6.500 6.500 0 1 1 13 4.500" /><path d="M14 1v5H9z" fill="#5f6368" stroke="none" /></svg></NavButton>
            <NavButton><svg width="16" height="16" viewBox="0 0 16 16" {...Stroke} strokeWidth="1.700"><path d="M1 8l7-6.500L15 8M3.500 7v8h9V7" /></svg></NavButton>
          </NavGroup>
          <Omnibox>
            <svg width="14" height="14" viewBox="0 0 14 14"><circle cx="7" cy="7" r="6" fill="none" stroke="#5f6368" strokeWidth="1.500" /><path d="M7 6v4M7 3.500v1.500" stroke="#5f6368" strokeWidth="1.500" /></svg>
            <Url><b>mailinator.com</b>/v4/public/inboxes.jsp?msgid=keya-1615794689-876627</Url>
            <svg width="16" height="16" viewBox="0 0 16 16" fill="none" stroke="#5f6368" strokeWidth="1.500"><path d="M8 1.500l2 4.400 4.700.5-3.500 3.200 1 4.700L8 11.900l-4.200 2.400 1-4.700L1.300 6.400 6 5.900z" /></svg>
          </Omnibox>
          <Extensions>
            {extensionIcons.map(icon => <Extension key={icon.key}>{icon}</Extension>)}
            <ToolDivider />
            <Extension>
              <svg width="18" height="18" viewBox="0 0 18 18"><circle cx="9" cy="9" r="8.500" fill="#5f6368" /><circle cx="9" cy="7" r="3" fill="#fff" /><path d="M3.500 13.500c2-3 9-3 11 0a7 7 0 0 1-11 0z" fill="#fff" /></svg>
            </Extension>
            <Extension>
              <svg width="18" height="18" viewBox="0 0 18 18"><circle cx="9" cy="9" r="8.500" fill="#e02020" /><path d="M9 3.500L14 9h-3v5H7V9H4z" fill="#fff" /></svg>
            </Extension>
          </Extensions>
        </Toolbar>
        <Bookmarks>
          {bookmarks.map(b => (
            <Bookmark key={b.title} $w={b.w}>{b.icon}{b.title}</Bookmark>
          ))}
          <MoreBookmarks>»</MoreBookmarks>
        </Bookmarks>
        <Page>
          <PageBody>
            <SiteHeader>
              <Brand><MailinatorLogo /><BrandName>MAILINATOR</BrandName></Brand>
              <SiteNav>
                <SiteNavLink>Home</SiteNavLink>
                <SiteNavLink>Email</SiteNavLink>
                <SiteNavLink>Pricing</SiteNavLink>
                <SiteNavLink>Documentation</SiteNavLink>
                <SiteNavLink>FAQ</SiteNavLink>
                <LoginButton>Login</LoginButton>
              </SiteNav>
            </SiteHeader>
            <SiteMain>
              <Sidebar>
                <SideNav>
                  <SideNavItem><MailIcon />Public Inboxes</SideNavItem>
                  <SideNavItem><ChatIcon />Public SMS</SideNavItem>
                  <SideNavItem><DollarIcon />Pricing</SideNavItem>
                  <SideNavItem $muted><ChatIcon />Request Trial</SideNavItem>
                </SideNav>
                <FootLink>Terms</FootLink>
                <FootLink>Privacy</FootLink>
                <FootLink>Accessibility</FootLink>
                <FootLink>Security</FootLink>
                <OldUi>Old Mailinator UI</OldUi>
                <Copyright>Copyright 2021 Manybrain, LLC,<br />All Rights Reserved</Copyright>
              </Sidebar>
              <Content>
                <MetaCard>
                  <MetaList>
                    <MetaLabel>To</MetaLabel><MetaValue $ls={0.1}>keya</MetaValue>
                    <MetaLabel>From</MetaLabel><MetaValue $ls={-0.6}>testbydev.an@gmail.com</MetaValue>
                    <MetaLabel>Sending IP</MetaLabel><MetaValue $ls={0.25}>209.85.210.177</MetaValue>
                    <MetaLabel>Received</MetaLabel><MetaValue $ls={0.15}>2021-03-15 13:21:29</MetaValue>
                  </MetaList>
                  <MetaActions>
                    <DeleteButton><TrashIcon />Delete</DeleteButton>
                  </MetaActions>
                </MetaCard>
                <MailCard>
                  <MailTabs>
                    <MailTab $active $ls={-1.5}>HTML</MailTab>
                    <MailTab $ls={0.5}>JSON</MailTab>
                    <MailTab $ls={-0.5}>RAW</MailTab>
                    <MailTab>LINKS</MailTab>
                    <MailTab $ls={-0.8}>ATTACHMENTS</MailTab>
                  </MailTabs>
                  <MailFrame>
                    <FrameViewport>
                      <MailLogo>
                        <MailLogoWord><span>Te</span><MailLogoGear />Surgery</MailLogoWord>
                        <LogoPulse />
                      </MailLogo>
                      <MailText>hii keya!!</MailText>
                      <MailText>Thank u for contact us.</MailText>
                      <MailFooter>© Copyright All Rights Reserved, Tech Repair 2021.</MailFooter>
                    </FrameViewport>
                    <VScroll>
                      <Arrow dir="up" c="#a3a3a3" />
                      <VThumb $h={158} />
                      <ScrollGap />
                      <Arrow dir="down" />
                    </VScroll>
                    <HScroll>
                      <Arrow dir="left" c="#a3a3a3" />
                      <HThumb $w={803} />
                      <ScrollGap />
                      <Arrow dir="right" />
                    </HScroll>
                    <ScrollCorner />
                  </MailFrame>
                </MailCard>
              </Content>
            </SiteMain>
          </PageBody>
          <VScroll>
            <Arrow dir="up" />
            <VThumb $h={556} $top={51} />
            <ScrollGap />
            <Arrow dir="down" c="#a3a3a3" />
          </VScroll>
        </Page>
      </Browser>
    </Desktop>
  </Screen>
);

export default App;
